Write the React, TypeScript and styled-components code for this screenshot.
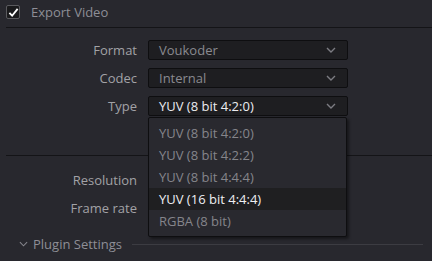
import React from 'react';
import styled, { createGlobalStyle } from 'styled-components';

const GlobalStyle = createGlobalStyle`
    html, body {
        margin: 0;
        padding: 0;
        background: #28282e;
    }
    body {
        font-family: 'Open Sans', 'Noto Sans', sans-serif;
        font-size: 13px;
    }
`;

const typeOptions = ['YUV (8 bit 4:2:0)', 'YUV (8 bit 4:2:2)', 'YUV (8 bit 4:4:4)', 'YUV (16 bit 4:4:4)', 'RGBA (8 bit)'];

function Chevron() {
    return (
        <StyledChevron viewBox="0 0 10 6">
            <path d="M1 1 L5 5 L9 1" fill="none" stroke="currentColor" strokeWidth="1.4" />
        </StyledChevron>
    );
}

function Select({ value, active }: { value: string; active?: boolean }) {
    return (
        <StyledSelect>
            <StyledSelectValue $active={active}>{value}</StyledSelectValue>
            <Chevron />
        </StyledSelect>
    );
}

export default function App() {
    return (
        <>
            <GlobalStyle />
            <StyledPanel>
                <StyledHeader>
                    <StyledCheckbox>
                        <svg viewBox="0 0 12 12" width="11" height="11">
                            <path d="M1.5 6.5 L4.5 9.5 L10.5 2" fill="none" stroke="#fff" strokeWidth="2" />
                        </svg>
                    </StyledCheckbox>
                    <StyledHeaderText>Export Video</StyledHeaderText>
                </StyledHeader>

                <StyledSection $height={128}>
                    <StyledRow>
                        <StyledLabel>Format</StyledLabel>
                        <Select value="Voukoder" />
                    </StyledRow>
                    <StyledRow>
                        <StyledLabel>Codec</StyledLabel>
                        <Select value="Internal" />
                    </StyledRow>
                    <StyledRow>
                        <StyledLabel>Type</StyledLabel>
                        <StyledSelectWrap>
                            <Select value="YUV (8 bit 4:2:0)" active />
                            <StyledMenu>
                                {typeOptions.map((option, index) => (
                                    <StyledMenuItem key={option} $highlighted={index === 3}>
                                        {option}
                                    </StyledMenuItem>
                                ))}
                            </StyledMenu>
                        </StyledSelectWrap>
                    </StyledRow>
                </StyledSection>

                <StyledPlainSection>
                    <StyledRow>
                        <StyledLabel>Resolution</StyledLabel>
                    </StyledRow>
                    <StyledRow>
                        <StyledLabel>Frame rate</StyledLabel>
                    </StyledRow>
                </StyledPlainSection>

                <StyledGroupHeader>
                    <StyledGroupChevron viewBox="0 0 10 6">
                        <path d="M1 1 L5 5 L9 1" fill="none" stroke="currentColor" strokeWidth="1.2" />
                    </StyledGroupChevron>
                    <StyledGroupTitle>Plugin Settings</StyledGroupTitle>
                    <StyledGroupLine />
                </StyledGroupHeader>
            </StyledPanel>
        </>
    );
}

const StyledPanel = styled.div`
    width: 432px;
    height: 261px;
    overflow: hidden;
    display: flex;
    flex-direction: column;
`;

const StyledHeader = styled.div`
    display: flex;
    align-items: center;
    height: 28px;
    margin-left: 6px;
    border-bottom: 1px solid #141417;
    box-sizing: border-box;
`;

const StyledCheckbox = styled.div`
    width: 14px;
    height: 14px;
    box-sizing: border-box;
    border: 1px solid #5a5a5e;
    border-radius: 2px;
    background: #1a1a1c;
    display: flex;
    align-items: center;
    justify-content: center;
    margin-top: -3px;
`;

const StyledHeaderText = styled.span`
    margin-left: 11px;
    margin-top: -4px;
    color: #8e8e96;
`;

const StyledSection = styled.div<{ $height: number }>`
    display: flex;
    flex-direction: column;
    gap: 8px;
    height: ${(p) => p.$height}px;
    padding-top: 12px;
    margin-left: 6px;
    box-sizing: border-box;
    border-bottom: 1px solid #141417;
`;

const StyledPlainSection = styled.div`
    display: flex;
    flex-direction: column;
    gap: 8px;
    padding-top: 14px;
    margin-left: 6px;
`;

const StyledRow = styled.div`
    display: flex;
    align-items: center;
    height: 20px;
`;

const StyledLabel = styled.span`
    width: 131px;
    text-align: right;
    color: #a2a2a6;
    margin-right: 11px;
`;

const StyledSelectWrap = styled.div`
    position: relative;
`;

const StyledSelect = styled.div`
    width: 200px;
    height: 20px;
    box-sizing: border-box;
    border: 1px solid #0e0e10;
    border-radius: 2px;
    background: #1e1e21;
    display: flex;
    align-items: center;
    justify-content: space-between;
    padding: 0 11px 0 10px;
`;

const StyledSelectValue = styled.span<{ $active?: boolean }>`
    color: ${(p) => (p.$active ? '#ececf0' : '#8a8a90')};
`;

const StyledChevron = styled.svg`
    width: 10px;
    height: 6px;
    color: #7c7c82;
`;

const StyledMenu = styled.div`
    position: absolute;
    top: 21px;
    left: 0;
    width: 199px;
    box-sizing: border-box;
    padding: 4px 0;
    background: #29292f;
    border: 1px solid #0e0e10;
    border-radius: 2px;
    box-shadow: 2px 2px 3px rgba(0, 0, 0, 0.45);
    z-index: 2;
`;

const StyledMenuItem = styled.div<{ $highlighted?: boolean }>`
    height: 22px;
    display: flex;
    align-items: center;
    padding-left: 10px;
    color: ${(p) => (p.$highlighted ? '#eeeef2' : '#85858b')};
    background: ${(p) => (p.$highlighted ? '#1f1f21' : 'transparent')};
`;

const StyledGroupHeader = styled.div`
    display: flex;
    align-items: center;
    margin-top: 17px;
    padding-left: 19px;
    padding-right: 9px;
`;

const StyledGroupChevron = styled.svg`
    width: 9px;
    height: 6px;
    color: #85858c;
`;

const StyledGroupTitle = styled.span`
    margin-left: 5px;
    color: #8e8e96;
`;

const StyledGroupLine = styled.div`
    flex: 1;
    height: 1px;
    margin-left: 10px;
    background: #3c3c42;
`;
